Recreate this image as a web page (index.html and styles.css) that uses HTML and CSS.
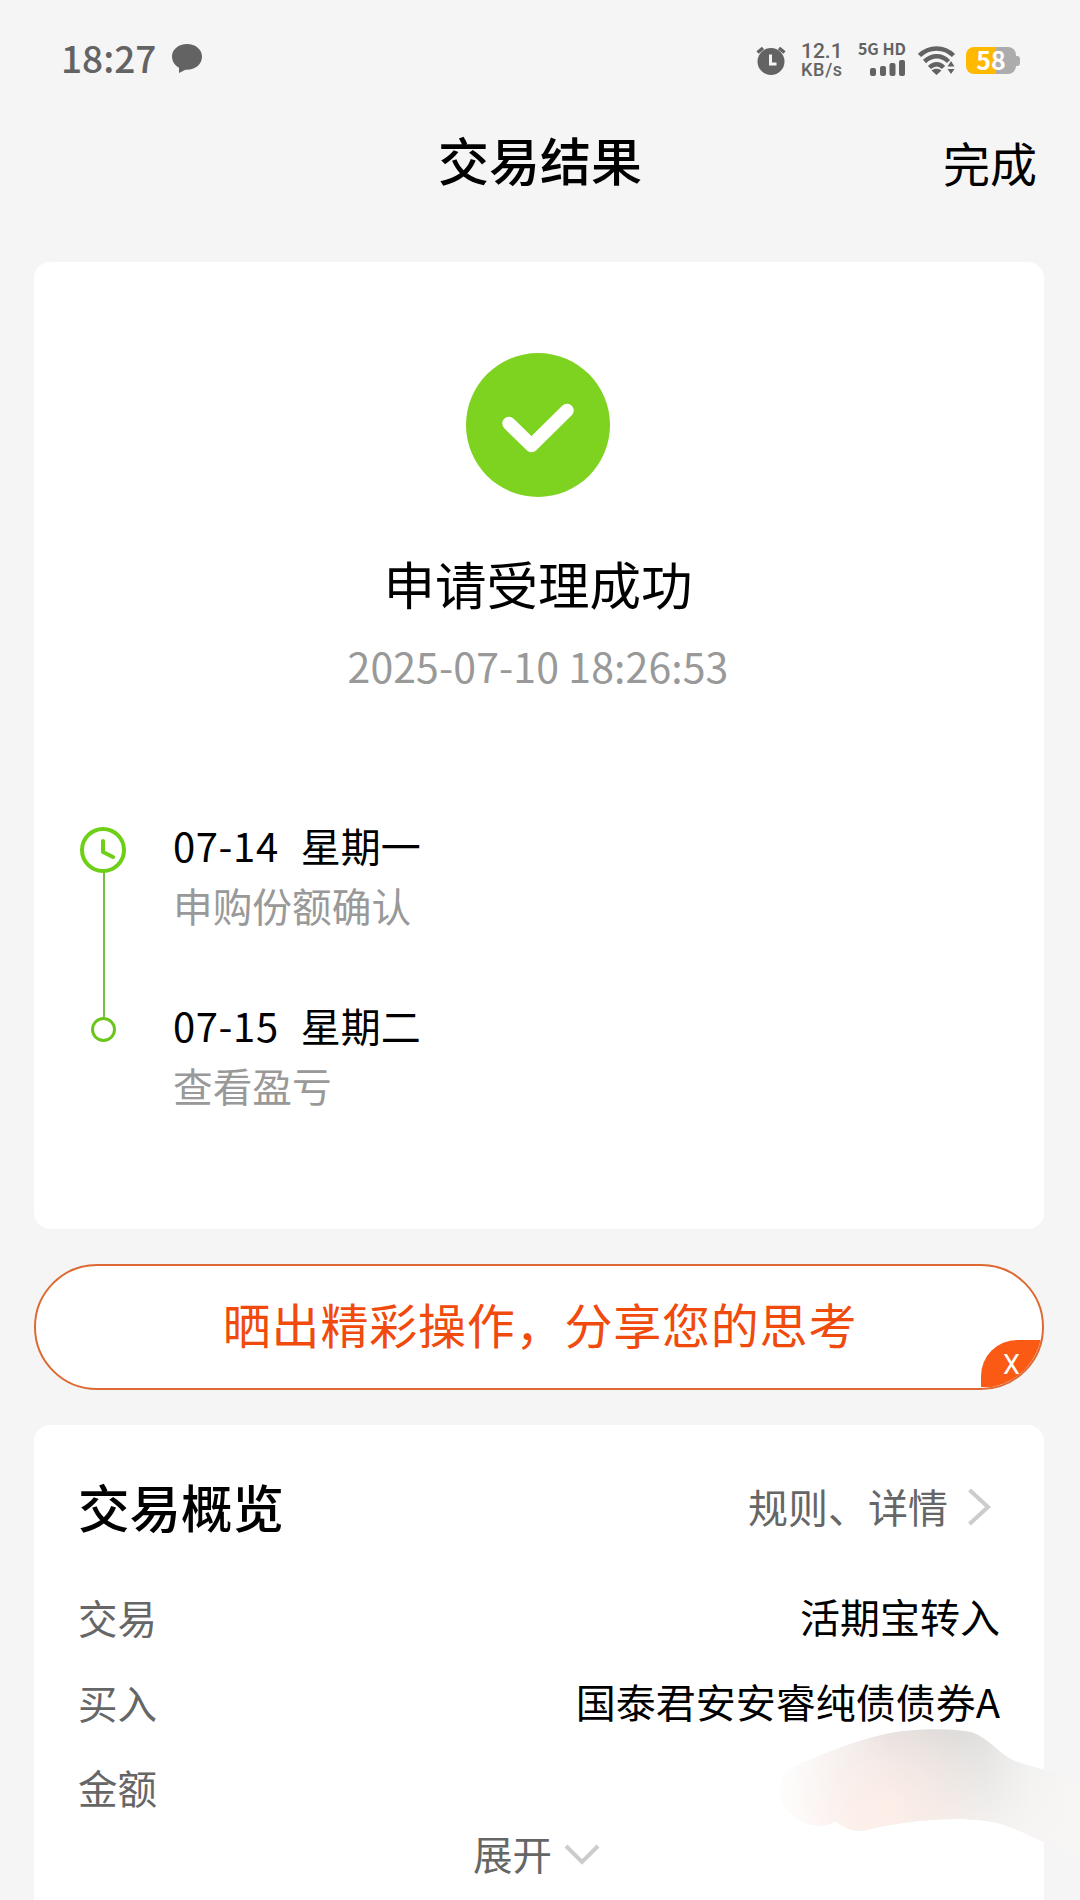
FILE: index.html
```html
<!DOCTYPE html>
<html lang="zh-CN">
<head>
<meta charset="utf-8">
<title>交易结果</title>
<meta name="viewport" content="width=device-width, initial-scale=1.0">
<link rel="stylesheet" href="styles.css">
</head>
<body>

<div class="status-bar">
  <span class="time">18:27</span>
  <svg class="bubble" width="32" height="32" viewBox="0 0 32 32"><path d="M16 2C7.500 2 1 7.500 1 14.500c0 5 3 9 7 11.200L8 31l6.500-3.200c10 .4 16.500-5.800 16.500-13.300C31 7.500 24.500 2 16 2z" fill="#636363"/></svg>
  <div class="status-right">
    <svg class="alarm" width="30" height="32" viewBox="0 0 30 32">
      <circle cx="15" cy="17.500" r="13.500" fill="#636363"/>
      <path d="M1.500 8.500L7 4M28.500 8.500L23 4" stroke="#636363" stroke-width="3.500" fill="none"/>
      <path d="M14.500 10.500v9.500h6" stroke="#f5f5f5" stroke-width="3" fill="none"/>
    </svg>
    <div class="speed"><span class="speed-num">12.1</span><span class="speed-unit">KB/s</span></div>
    <div class="signal">
      <span class="signal-text">5G HD</span>
      <svg width="36" height="17" viewBox="0 0 36 17" fill="#636363">
        <rect x="0" y="9" width="6" height="8" rx="2"/>
        <rect x="10" y="7" width="6" height="10" rx="2"/>
        <rect x="19.500" y="4" width="6" height="13" rx="2"/>
        <rect x="29" y="1" width="6" height="16" rx="2"/>
      </svg>
    </div>
    <svg class="wifi" width="38" height="32" viewBox="0 0 38 32">
      <g fill="none" stroke="#636363" stroke-width="4.500">
        <path d="M1.500 11.500C11 2 26 2 35.500 11.500"/>
        <path d="M6.500 17.500C14 10.500 23.500 10.500 30.500 17.500"/>
        <path d="M11.500 23.500C16 19 21.500 19 25.500 23.500"/>
      </g>
      <path d="M13.500 26.500c3-2.300 7-2.300 10 0l-5 4.500zM29.500 22.500l3.500-5.500 3.500 5.500zM29.500 25l3.500 5 3.500-5z" fill="#636363"/>
    </svg>
    <div class="battery"><span>58</span></div>
  </div>
</div>

<div class="nav">
  <h1>交易结果</h1>
  <a class="done">完成</a>
</div>

<div class="card result">
  <svg class="success" width="144" height="144" viewBox="0 0 144 144">
    <circle cx="72" cy="72" r="72" fill="#7ed321"/>
    <path d="M43 70.500L65.500 92.500L101 57.500" fill="none" stroke="#fff" stroke-width="13.500" stroke-linecap="round" stroke-linejoin="round"/>
  </svg>
  <h2>申请受理成功</h2>
  <p class="date">2025-07-10 18:26:53</p>

  <div class="timeline">
    <svg class="track" width="48" height="220" viewBox="0 0 48 220" fill="none">
      <path d="M25 46v145" stroke="#76bd42" stroke-width="2"/>
      <circle cx="24" cy="24" r="21" fill="#fff" stroke="#6ecf17" stroke-width="4"/>
      <path d="M24 15v11l10 5" stroke="#6ecf17" stroke-width="4" stroke-linecap="round" stroke-linejoin="round"/>
      <circle cx="24.500" cy="203.500" r="11" fill="#fff" stroke="#6cc51a" stroke-width="3"/>
    </svg>
    <div class="steps">
      <div class="step">
        <div class="day"><span class="day-date">07-14</span><span>星期一</span></div>
        <div class="note">申购份额确认</div>
      </div>
      <div class="step">
        <div class="day"><span class="day-date">07-15</span><span>星期二</span></div>
        <div class="note">查看盈亏</div>
      </div>
    </div>
  </div>
</div>

<div class="share">
  <span class="share-text">晒出精彩操作，分享您的思考</span>
  <span class="close">X</span>
</div>

<div class="card overview">
  <div class="overview-head">
    <h2>交易概览</h2>
    <div class="more">
      <span>规则、详情</span>
      <svg width="26" height="40" viewBox="0 0 26 40"><path d="M2.500 4L21 21L2.500 38" fill="none" stroke="#ccc" stroke-width="4"/></svg>
    </div>
  </div>
  <div class="row"><span class="label">交易</span><span>活期宝转入</span></div>
  <div class="row"><span class="label">买入</span><span>国泰君安安睿纯债债券A</span></div>
  <div class="row"><span class="label">金额</span></div>
  <div class="expand">
    <span>展开</span>
    <svg width="38" height="24" viewBox="0 0 38 24"><path d="M3 5L19 21L35 5" fill="none" stroke="#ccc" stroke-width="4"/></svg>
  </div>

  <svg class="smudge" width="296" height="132" viewBox="0 0 296 132">
    <defs>
      <linearGradient id="gray" x1="0" y1="0" x2="1" y2="0">
        <stop offset="0" stop-color="#f0efef"/>
        <stop offset=".35" stop-color="#e2dfde"/>
        <stop offset=".55" stop-color="#dfdcda"/>
        <stop offset=".68" stop-color="#e2e1e0"/>
        <stop offset=".84" stop-color="#f1f1f1"/>
        <stop offset="1" stop-color="#f6f6f6"/>
      </linearGradient>
      <linearGradient id="light" x1="0" y1="0" x2="0" y2="1">
        <stop offset=".05" stop-color="#f9f6f4" stop-opacity="0"/>
        <stop offset=".75" stop-color="#f9f6f4" stop-opacity=".75"/>
      </linearGradient>
      <linearGradient id="edge" x1="0" y1=".15" x2="1" y2="0">
        <stop offset="0" stop-color="#fff" stop-opacity=".85"/>
        <stop offset=".12" stop-color="#fff" stop-opacity=".65"/>
        <stop offset=".38" stop-color="#fff" stop-opacity="0"/>
      </linearGradient>
      <radialGradient id="pink" gradientUnits="userSpaceOnUse" cx="100" cy="82" r="105">
        <stop offset="0" stop-color="#feeee8" stop-opacity=".95"/>
        <stop offset=".4" stop-color="#fcebe5" stop-opacity=".6"/>
        <stop offset="1" stop-color="#fcebe5" stop-opacity="0"/>
      </radialGradient>
      <clipPath id="shape"><path d="M-4 60C-3 49 4 41 14 36C36 26 78 9 107 4C132-1 174-1 190 4C208 12 218 28 234 33C248 38 268 42 296 53V129C278 121 262 114 240 104C218 93 200 90 169 90C138 90 105 95 82 101C72 103 60 100 52 92C42 98 30 97 22 94C8 88-5 75-4 60z"/></clipPath>
    </defs>
    <g clip-path="url(#shape)">
      <rect x="-4" width="300" height="132" fill="url(#gray)"/>
      <rect x="-4" width="300" height="132" fill="url(#light)"/>
      <rect x="-4" width="300" height="132" fill="url(#edge)"/>
      <rect x="-4" width="300" height="132" fill="url(#pink)"/>
    </g>
  </svg>
</div>

</body>
</html>
```
FILE: styles.css
```css
* { box-sizing: border-box; }
body {
  margin: 0;
  height: 1900px;
  overflow: hidden;
  font-family: "Noto Sans CJK SC", sans-serif;
  background: #f5f5f5;
  color: #000;
}
h1, h2, p { margin: 0; }
svg { display: block; flex: none; }

.status-bar {
  display: flex;
  align-items: center;
  height: 120px;
  padding: 0 60px 0 61px;
  color: #636363;
}
.time {
  margin-bottom: 6px;
  font-size: 37px;
  font-weight: 500;
  line-height: 40px;
}
.bubble { margin: 0 0 4px 15px; }
.status-right {
  display: flex;
  align-items: center;
  margin-left: auto;
}
.speed {
  display: flex;
  flex-direction: column;
  width: 44px;
  margin-left: 15px;
  font-family: Roboto, sans-serif;
  font-weight: 500;
  white-space: nowrap;
}
.speed-num { font-size: 21px; line-height: 20px; }
.speed-unit { font-size: 18px; letter-spacing: .7px; line-height: 18px; }
.signal {
  display: flex;
  flex-direction: column;
  align-items: flex-end;
  width: 49px;
  margin: 0 0 3px 12px;
}
.signal-text {
  margin-bottom: 3px;
  font-size: 16px;
  font-weight: 700;
  line-height: 15px;
  white-space: nowrap;
}
.wifi { margin-left: 12px; }
.battery {
  position: relative;
  width: 50px;
  height: 27px;
  margin: 1px 4px 0 10px;
  border-radius: 8px;
  background: linear-gradient(to right, #ffb900 30px, #acacac 30px);
  color: #fff;
  font-size: 25px;
  font-weight: 700;
  line-height: 25px;
  text-align: center;
}
.battery::after {
  content: "";
  position: absolute;
  right: -4px;
  top: 9px;
  width: 4px;
  height: 10px;
  border-radius: 0 3px 3px 0;
  background: #acacac;
}

.nav {
  display: grid;
  grid-template-columns: 1fr auto 1fr;
  align-items: start;
  height: 84px;
  padding: 0 43px;
}
.nav h1 {
  grid-column: 2;
  font-size: 51px;
  font-weight: 500;
  line-height: 78px;
}
.done {
  justify-self: end;
  font-size: 47px;
  line-height: 83px;
}

.card {
  margin: 0 36px 0 34px;
  border-radius: 16px;
  background: #fff;
}
.result {
  display: flex;
  flex-direction: column;
  align-items: center;
  height: 967px;
  margin-top: 58px;
  padding: 91px 45px 0 43px;
}
.result h2 {
  margin-top: 48px;
  font-size: 51.500px;
  font-weight: 400;
  line-height: 76px;
}
.date {
  margin-top: 14px;
  color: #999;
  font-size: 41px;
  letter-spacing: .1px;
  line-height: 60px;
}
.timeline {
  display: flex;
  align-self: stretch;
  gap: 46px;
  margin-top: 120px;
  font-size: 40px;
}
.track { margin: 11px 0 0 2px; }
.step { height: 180px; }
.day {
  display: flex;
  gap: 22px;
  line-height: 60px;
}
.day-date { letter-spacing: .6px; }
.note {
  color: #999;
  font-size: 39.700px;
  line-height: 60px;
}

.share {
  position: relative;
  display: flex;
  justify-content: center;
  height: 126px;
  margin: 35px 36px 35px 34px;
  border: 2px solid #dd6a32;
  border-radius: 63px;
  background: #fff;
  overflow: hidden;
}
.share-text {
  color: #f04a0c;
  font-size: 48px;
  letter-spacing: .8px;
  padding-left: 2px;
  line-height: 114px;
}
.close {
  position: absolute;
  right: 0;
  bottom: 1px;
  width: 61px;
  height: 47px;
  border-top-left-radius: 36px;
  background: #fb5a14;
  color: #fff;
  font-family: Roboto, sans-serif;
  font-size: 27px;
  line-height: 51px;
  text-align: center;
}

.overview {
  position: relative;
  height: 475px;
  padding: 41px 44px 0;
  border-radius: 16px 16px 0 0;
}
.overview-head {
  display: flex;
  align-items: center;
  justify-content: space-between;
  height: 80px;
  margin-bottom: 28px;
}
.overview-head h2 {
  font-size: 51.500px;
  font-weight: 500;
  line-height: 78px;
}
.more {
  display: flex;
  align-items: center;
  gap: 19px;
  margin-right: 7px;
  color: #666;
  font-size: 40px;
}
.row {
  display: flex;
  align-items: center;
  justify-content: space-between;
  height: 85px;
  font-size: 40px;
  line-height: 85px;
}
.label { color: #666; font-size: 39.500px; }
.expand {
  display: flex;
  align-items: center;
  justify-content: center;
  gap: 11px;
  height: 47px;
  padding-right: 4px;
  color: #666;
  font-size: 39.500px;
}
/* blurred patch over the amount value */
.smudge {
  position: absolute;
  left: 750px;
  top: 304px;
  overflow: visible;
}
```
